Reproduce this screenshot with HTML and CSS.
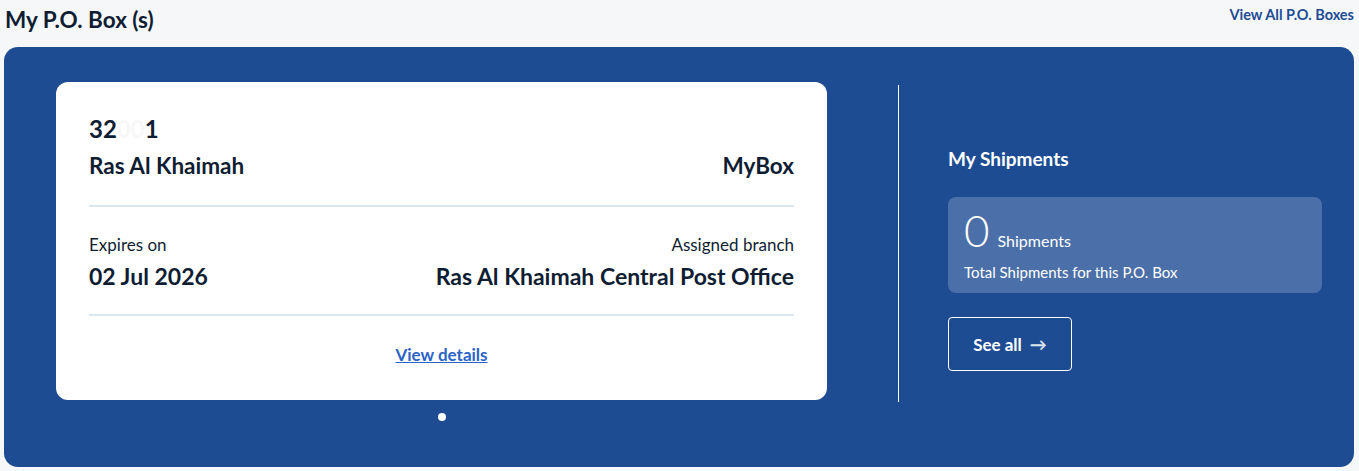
FILE: index.html
```html
<!DOCTYPE html>
<html>
<head>
<meta charset="utf-8">
<link rel="stylesheet" href="styles.css">
</head>
<body>
<div class="page">
  <div class="top">
    <h1 class="title">My P.O. Box (s)</h1>
    <a class="view-all" href="#">View All P.O. Boxes</a>
  </div>
  <div class="panel">
    <div class="left">
      <div class="card">
        <div class="box-no">32<span class="mask">00</span>1</div>
        <div class="row name-row">
          <span>Ras Al Khaimah</span>
          <span>MyBox</span>
        </div>
        <div class="divider"></div>
        <div class="row info-row">
          <div class="info">
            <div class="label">Expires on</div>
            <div class="value">02 Jul 2026</div>
          </div>
          <div class="info right">
            <div class="label">Assigned branch</div>
            <div class="value">Ras Al Khaimah Central Post Office</div>
          </div>
        </div>
        <div class="divider"></div>
        <div class="details"><a href="#">View details</a></div>
      </div>
      <div class="dots"><span class="dot"></span></div>
    </div>
    <div class="vline"></div>
    <div class="shipments">
      <div class="ship-title">My Shipments</div>
      <div class="ship-box">
        <div class="count"><span class="num">0</span><span class="unit">Shipments</span></div>
        <div class="total">Total Shipments for this P.O. Box</div>
      </div>
      <a class="see-all" href="#">See all <span class="arrow">&#8594;</span></a>
    </div>
  </div>
</div>
</body>
</html>
```
FILE: styles.css
```css
* { box-sizing: border-box; }
html, body { margin: 0; padding: 0; }
body {
  background: #f6f7f9;
  font-family: Lato, "Open Sans", sans-serif;
  color: #0f1d33;
  width: 1359px;
  height: 471px;
  overflow: hidden;
}
.page { padding: 0 5px 0 4px; }
.top {
  display: flex;
  justify-content: space-between;
  align-items: center;
  height: 47px;
  padding-bottom: 8px;
}
.title {
  margin: 0 0 0 1px;
  font-size: 22.5px;
  font-weight: 700;
  color: #0f1d33;
}
.view-all {
  font-size: 14.5px;
  font-weight: 700;
  color: #1e4d94;
  text-decoration: none;
  margin-bottom: 10px;
}
.panel {
  background: #1e4c93;
  border-radius: 14px;
  height: 420px;
  display: flex;
  padding: 35px 32px 0 52px;
}
.left { width: 771px; }
.card {
  background: #fff;
  border-radius: 12px;
  height: 318px;
  padding: 33px 33px 0 33px;
}
.box-no {
  font-size: 24px;
  font-weight: 700;
  line-height: 28px;
}
.mask { color: #f7f7f7; }
.row { display: flex; justify-content: space-between; }
.name-row {
  font-size: 22.5px;
  font-weight: 700;
  margin-top: 10px;
  line-height: 26px;
  padding-bottom: 26px;
}
.divider { height: 2px; background: #dbe6f3; }
.info-row { padding: 27px 0 24px; }
.info.right { text-align: right; }
.label { font-size: 17px; line-height: 22px; }
.value { font-size: 23px; font-weight: 700; margin-top: 6px; line-height: 28px; }
.details { text-align: center; padding-top: 28px; line-height: 22px; }
.details a {
  color: #2a64c6;
  font-weight: 700;
  font-size: 17px;
}
.dots { display: flex; justify-content: center; padding-top: 13px; }
.dot { width: 8px; height: 8px; border-radius: 50%; background: #fff; }
.vline {
  width: 1px;
  background: #fff;
  height: 317px;
  margin: 3px 49px 0 71px;
}
.shipments { flex: 1; padding-top: 65px; color: #fff; }
.ship-title { font-size: 19px; font-weight: 700; line-height: 24px; }
.ship-box {
  margin-top: 26px;
  background: #4b6fa8;
  border-radius: 8px;
  height: 96px;
  padding: 8px 16px;
}
.count { display: flex; align-items: baseline; }
.num { font-size: 44px; font-weight: 300; line-height: 50px; }
.unit { font-size: 16px; margin-left: 8px; }
.total { font-size: 15px; margin-top: 8px; }
.see-all {
  display: inline-flex;
  align-items: center;
  justify-content: center;
  margin-top: 24px;
  width: 124px;
  height: 54px;
  border: 1px solid #fff;
  border-radius: 4px;
  color: #fff;
  text-decoration: none;
  font-size: 17px;
  font-weight: 700;
}
.arrow { margin-left: 8px; color: #dde4ee; }
```
